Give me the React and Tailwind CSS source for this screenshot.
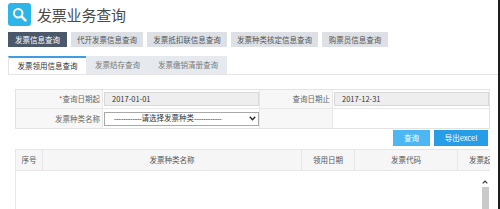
import React from "react";

const navItems = [
  { t: "发票信息查询", w: "w-[59px]", active: true },
  { t: "代开发票信息查询", w: "w-[72px]" },
  { t: "发票抵扣联信息查询", w: "w-[80px]" },
  { t: "发票种类核定信息查询", w: "w-[87px]" },
  { t: "购票员信息查询", w: "w-[66px]" },
];

export default function App() {
  return (
    <div
      className="w-[500px] h-[209px] overflow-hidden bg-white flex text-[7.5px] leading-none"
      style={{ fontFamily: '"Noto Sans CJK SC", "Noto Sans", sans-serif' }}
    >
      <div className="w-[498px] flex flex-col">
        {/* header */}
        <div className="flex items-center h-[23px] mt-[3px] ml-[8px]">
          <div className="w-[23px] h-[23px] rounded-[3px] bg-[#2db5ea] flex items-center justify-center">
            <svg width="17" height="17" viewBox="0 0 20 20">
              <circle cx="8.5" cy="8.5" r="5" fill="none" stroke="white" strokeWidth="2.4" />
              <line x1="12.3" y1="12.3" x2="17" y2="17" stroke="white" strokeWidth="3" strokeLinecap="round" />
            </svg>
          </div>
          <div className="ml-[6px] text-[15px] text-[#4a4a4a] tracking-[-0.2px]">发票业务查询</div>
        </div>

        {/* nav buttons */}
        <div className="flex gap-[4px] mt-[6px] ml-[8px]">
          {navItems.map((n) => (
            <div
              key={n.t}
              className={`${n.w} h-[15px] flex items-center justify-center ${
                n.active ? "bg-[#4b5869] text-white" : "bg-[#dde1e6] text-[#555]"
              }`}
            >
              {n.t}
            </div>
          ))}
        </div>

        {/* tabs */}
        <div className="mt-[9px] ml-[8px] h-[19px] flex border-b border-[#e4e4e4]">
          <div className="w-[78px] h-[18px] bg-white border-t-2 border-[#3d9fe3] flex items-center justify-center text-[#333] border-l border-l-[#e4e4e4]">
            发票领用信息查询
          </div>
          <div className="w-[63px] h-[18px] bg-[#e6e9ed] flex items-center justify-center text-[#7a7a7a]">
            发票结存查询
          </div>
          <div className="w-[78px] h-[18px] bg-[#e6e9ed] flex items-center justify-center text-[#7a7a7a]">
            发票缴销清册查询
          </div>
        </div>

        {/* form */}
        <div className="mt-[14px] ml-[15px] w-[475px] border border-[#e3e3e3] flex flex-col">
          <div className="h-[19px] flex border-b border-[#e8e8e8]">
            <div className="w-[87px] bg-[#f7f7f7] flex items-center justify-end pr-[2px] text-[#666] border-r border-[#e8e8e8]">
              <span className="text-[#e33]">*</span>查询日期起
            </div>
            <div className="w-[156px] flex items-center pl-[1px]">
              <div className="w-[155px] h-[14px] bg-[#eeeeee] border border-[#d8d8d8] flex items-center pl-[7px] text-[#333]">
                2017-01-01
              </div>
            </div>
            <div className="w-[74px] bg-[#f7f7f7] flex items-center justify-end pr-[2px] text-[#666] border-x border-[#e8e8e8]">
              查询日期止
            </div>
            <div className="flex-1 flex items-center pl-[1px]">
              <div className="w-[155px] h-[14px] bg-[#eeeeee] border border-[#d8d8d8] flex items-center pl-[7px] text-[#333]">
                2017-12-31
              </div>
            </div>
          </div>
          <div className="h-[19px] flex">
            <div className="w-[87px] bg-[#f7f7f7] flex items-center justify-end pr-[2px] text-[#666] border-r border-[#e8e8e8]">
              发票种类名称
            </div>
            <div className="w-[156px] flex items-center pl-[1px]">
              <div className="w-[155px] h-[14px] bg-white border border-[#a9a9a9] flex items-center text-[#333]">
                <div className="flex-1 pl-[9px] whitespace-nowrap">
                  <span style={{ fontFamily: '"Liberation Sans", sans-serif' }} className="tracking-[-0.2px]">------------</span>
                  请选择发票种类
                  <span style={{ fontFamily: '"Liberation Sans", sans-serif' }} className="tracking-[-0.2px]">------------</span>
                </div>
                <div className="w-[12px] h-full flex items-center justify-center">
                  <svg width="7" height="5" viewBox="0 0 7 5">
                    <path d="M0.8 0.8 L3.5 3.8 L6.2 0.8" fill="none" stroke="#222" strokeWidth="1.3" />
                  </svg>
                </div>
              </div>
            </div>
            <div className="w-[74px] bg-[#f7f7f7] border-x border-[#e8e8e8]" />
            <div className="flex-1" />
          </div>
        </div>

        {/* action buttons */}
        <div className="mt-[1px] ml-[15px] w-[473px] flex justify-end gap-[4px]">
          <div className="w-[37px] h-[16px] bg-[#4cb7f2] text-white flex items-center justify-center">查询</div>
          <div className="w-[54px] h-[16px] bg-[#279ce7] text-white flex items-center justify-center">导出excel</div>
        </div>

        {/* table */}
        <div className="mt-[3px] ml-[15px] w-[475px] flex-1 border-l border-t border-[#e6e6e6] overflow-hidden flex flex-col">
          <div className="h-[21px] bg-[#f6f6f6] border-b border-[#e6e6e6] flex text-[#555] whitespace-nowrap">
            <div className="w-[27px] shrink-0 flex items-center justify-center border-r border-[#e6e6e6]">序号</div>
            <div className="w-[259px] shrink-0 flex items-center justify-center border-r border-[#e6e6e6]">发票种类名称</div>
            <div className="w-[53px] shrink-0 flex items-center justify-center border-r border-[#e6e6e6]">领用日期</div>
            <div className="w-[103px] shrink-0 flex items-center justify-center border-r border-[#e6e6e6]">发票代码</div>
            <div className="w-[67px] shrink-0 flex items-center justify-center">发票起始号码</div>
          </div>
          <div className="flex-1 flex">
            <div className="flex-1" />
            <div className="w-[8px] mr-[1px] flex flex-col items-center">
              <svg className="mt-[9px]" width="6" height="4" viewBox="0 0 6 4">
                <path d="M0.7 3.3 L3 1 L5.3 3.3" fill="none" stroke="#333" strokeWidth="1.2" />
              </svg>
              <div className="mt-[3px] w-[7px] flex-1 bg-[#c9c9c9]" />
            </div>
          </div>
        </div>
      </div>
      <div className="w-[2px] bg-[#1e1e1e]" />
    </div>
  );
}
